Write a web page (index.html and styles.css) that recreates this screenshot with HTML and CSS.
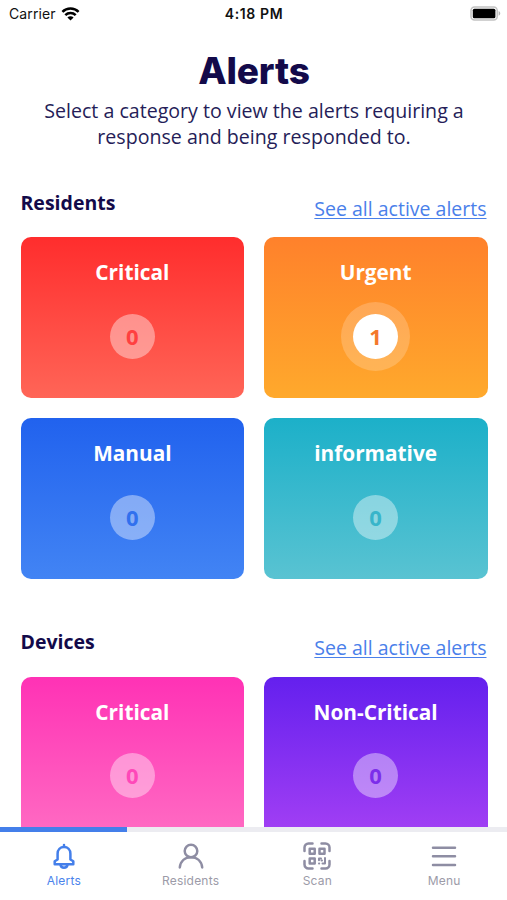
FILE: index.html
```html
<!DOCTYPE html>
<html lang="en">
<head>
    <meta charset="UTF-8">
    <meta name="viewport" content="width=device-width, initial-scale=1">
    <title>Alerts</title>
    <link rel="stylesheet" href="styles.css">
</head>
<body>
    <div class="app">
        <header class="status-bar">
            <div class="carrier">
                <span>Carrier</span>
                <svg width="19" height="14" viewBox="0 0 18 14" fill="none" stroke="#000" stroke-width="2.5">
                    <path d="M0.9 4.9a11.6 11.6 0 0 1 16.2 0"/>
                    <path d="M3.8 8.2a7.4 7.4 0 0 1 10.4 0"/>
                    <path d="M9 13.6L5.9 10.5a4.4 4.4 0 0 1 6.2 0z" fill="#000" stroke="none"/>
                </svg>
            </div>
            <div class="time">4:18 PM</div>
            <div class="battery">
                <svg width="31" height="15" viewBox="0 0 31 15">
                    <rect x="1" y="1" width="26.2" height="13" rx="3.5" fill="#fff" stroke="#c2c2c2" stroke-width="1.5"/>
                    <rect x="2.8" y="2.8" width="22.6" height="9.4" rx="1.5" fill="#000"/>
                    <path d="M28.6 5v4.8c2.2-.9 2.2-3.9 0-4.8z" fill="#b5b5b5"/>
                </svg>
            </div>
        </header>

        <main class="content">
            <h1 class="title">Alerts</h1>
            <p class="subtitle">Select a category to view the alerts requiring a<br>response and being responded to.</p>

            <section class="group">
                <div class="group-header">
                    <h2>Residents</h2>
                    <a href="#">See all active alerts</a>
                </div>
                <div class="cards">
                    <div class="card red"><h3>Critical</h3><span class="count">0</span></div>
                    <div class="card orange"><h3>Urgent</h3><span class="count active">1</span></div>
                    <div class="card blue"><h3>Manual</h3><span class="count">0</span></div>
                    <div class="card teal"><h3>informative</h3><span class="count">0</span></div>
                </div>
            </section>

            <section class="group">
                <div class="group-header">
                    <h2>Devices</h2>
                    <a href="#">See all active alerts</a>
                </div>
                <div class="cards">
                    <div class="card pink"><h3>Critical</h3><span class="count">0</span></div>
                    <div class="card purple"><h3>Non-Critical</h3><span class="count">0</span></div>
                </div>
            </section>
        </main>

        <nav class="tabs">
            <a class="tab selected" href="#">
                <svg width="28" height="28" viewBox="0 0 28 28">
                    <path d="M14 3v1.800M7.600 17.500v-5.700c0-4 2.700-6.800 6.400-6.800s6.400 2.800 6.400 6.800v5.700l2.900 1.800v3H4.700v-3z"/>
                    <path d="M10.500 22.800c.6 3.800 6.400 3.800 7 0"/>
                </svg>
                <span>Alerts</span>
            </a>
            <a class="tab" href="#">
                <svg width="28" height="28" viewBox="0 0 28 28">
                    <circle cx="14" cy="9" r="6.300"/>
                    <path d="M2.800 25.400c.8-6.200 5.200-10.100 11.200-10.100s10.400 3.900 11.200 10.100"/>
                </svg>
                <span>Residents</span>
            </a>
            <a class="tab" href="#">
                <svg width="28" height="28" viewBox="0 0 28 28">
                    <path d="M1.500 9V5.500a4 4 0 0 1 4-4H9.500M18.500 1.500h4a4 4 0 0 1 4 4V9M26.500 19v3.500a4 4 0 0 1-4 4h-4M9.500 26.500h-4a4 4 0 0 1-4-4V19"/>
                    <path d="M6.700 6.700h5v5h-5zM16.500 6.700h5v5h-5zM6.700 16.500h5v5h-5z"/>
                    <path d="M16 18.200v-1.700h2M16 21.500h.2M22 16v5.500h-2.500M19 18.500h-.5" stroke-width="2"/>
                </svg>
                <span>Scan</span>
            </a>
            <a class="tab" href="#">
                <svg width="28" height="28" viewBox="0 0 28 28">
                    <path d="M3 5.700h22M3 14.300h22M3 22.900h22"/>
                </svg>
                <span>Menu</span>
            </a>
        </nav>
    </div>
</body>
</html>
```

FILE: styles.css
```css
* {
    box-sizing: border-box;
}
body {
    margin: 0;
    background: #fff;
    color: #130a4a;
    font-family: "Open Sans", sans-serif;
}
h1, h2, h3, p {
    margin: 0;
}
.app {
    display: flex;
    flex-direction: column;
    height: 900px;
    overflow: hidden;
}

/* status bar */
.status-bar {
    display: grid;
    grid-template-columns: 1fr auto 1fr;
    align-items: center;
    flex: none;
    height: 27px;
    padding: 0 6px 0 9px;
    color: #111;
    font: 14px/27px Inter, sans-serif;
}
.carrier {
    display: flex;
    align-items: center;
    gap: 5px;
    letter-spacing: 0.1px;
}
.time {
    margin-left: -2px;
    font-weight: 600;
    letter-spacing: 0.6px;
}
.battery {
    display: flex;
    justify-content: flex-end;
}

/* page content */
.content {
    flex: 1;
    min-height: 0;
    overflow: hidden;
    padding: 20px 19.5px 0 20.5px;
}
.title {
    font: 800 37px/47px Inter, sans-serif;
    letter-spacing: -0.2px;
    text-align: center;
}
.subtitle {
    margin-top: 4px;
    color: #251d58;
    font-size: 19.6px;
    line-height: 26px;
    text-align: center;
}
.group {
    margin-bottom: 48.5px;
}
.subtitle + .group {
    margin-top: 38px;
}
.group-header {
    display: flex;
    justify-content: space-between;
    height: 49.4px;
}
.group-header h2 {
    font-size: 19.5px;
    line-height: 30px;
}
.group-header a {
    padding: 6px 1px 0 0;
    color: #4a80ea;
    font-size: 19.5px;
    line-height: 30px;
    text-underline-offset: 2px;
}
.cards {
    display: grid;
    grid-template-columns: 1fr 1fr;
    gap: 20px 19.5px;
}
.card {
    display: flex;
    flex-direction: column;
    align-items: center;
    height: 160.8px;
    padding-top: 20px;
    border-radius: 10px;
}
.card h3 {
    color: #fff;
    font-size: 20.8px;
    line-height: 30px;
}
.count {
    width: 45px;
    height: 45px;
    margin-top: 26.5px;
    border-radius: 50%;
    background: rgba(255, 255, 255, 0.4);
    font-size: 22px;
    font-weight: 700;
    line-height: 44px;
    text-align: center;
}
.count.active {
    background: #fff;
    box-shadow: 0 0 0 12px rgba(255, 255, 255, 0.2);
}
.red {
    background: linear-gradient(#ff2d2d, #ff6557);
    color: #ff4040;
}
.orange {
    background: linear-gradient(#ff812b, #ffa92c);
    color: #f4782b;
}
.blue {
    background: linear-gradient(#2162ee, #4284f4);
    color: #3170ee;
}
.teal {
    background: linear-gradient(#1cb0c9, #59c3d2);
    color: #38b5ca;
}
.pink {
    background: linear-gradient(#ff32b5, #ff6cc3);
    color: #ff48b9;
}
.purple {
    background: linear-gradient(#6420ee, #a440f4);
    color: #7c2eea;
}

/* bottom tabs */
.tabs {
    display: flex;
    flex: none;
    height: 73px;
}
.tab {
    display: flex;
    flex: 1;
    flex-direction: column;
    align-items: center;
    padding: 10px 0 0 1px;
    border-top: 5px solid #ececf1;
    color: #9c9ba8;
    font: 12px/16px Inter, sans-serif;
    letter-spacing: 0.2px;
    text-decoration: none;
}
.tab svg {
    margin-bottom: 3px;
    fill: none;
    stroke: #8e8da3;
    stroke-width: 2.5;
    stroke-linecap: round;
    stroke-linejoin: round;
}
.selected {
    border-color: #447fea;
    color: #4a83ec;
}
.selected svg {
    stroke: #447fea;
}
```
